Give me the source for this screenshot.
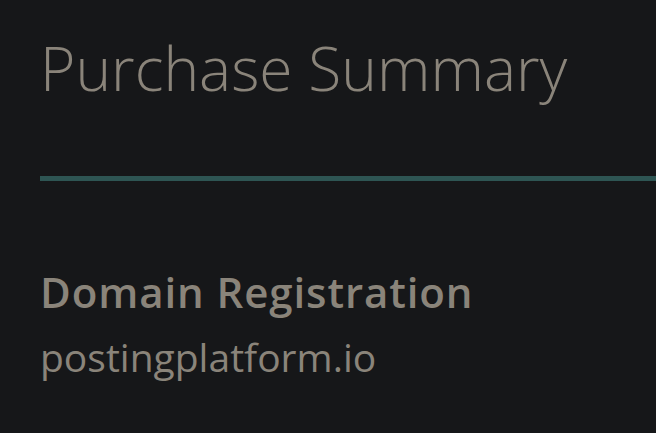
export default function App() {
  return (
    <div className="min-h-screen w-full bg-[#161719] pt-[38px] font-['Open_Sans',sans-serif] text-[#8a847a]">
      <h1 className="pl-[40px] text-[60.5px] font-light leading-[60px]">Purchase Summary</h1>
      <div className="ml-[40px] mt-[78px] h-[5px] bg-[#2e5553]" />
      <div className="pl-[40px] pt-[91px]">
        <h2 className="text-[42px] font-semibold leading-[40px] tracking-[0.9px]">Domain Registration</h2>
        <p className="mt-[25px] text-[39px] font-normal leading-[40px]">postingplatform.io</p>
      </div>
    </div>
  );
}
